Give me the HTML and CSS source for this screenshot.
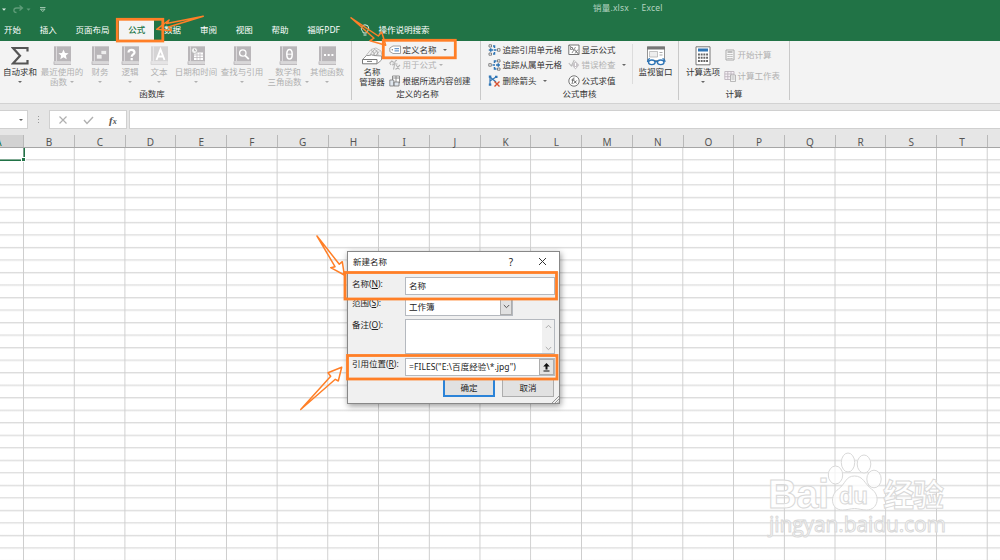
FILE: index.html
```html
<!DOCTYPE html>
<html lang="zh-CN">
<head>
    <meta charset="UTF-8">
    <meta name="viewport" content="width=device-width, initial-scale=1.0">
    <title>销量.xlsx - Excel</title>
    <link rel="stylesheet" href="styles.css">
</head>
<body>
    <header class="top">
        <div class="titlebar">
            <svg class="quick" width="50" height="18" viewBox="0 0 50 18">
                <path d="M2 8.5h4l-2 2.2z" fill="#dcebe2"/>
                <path d="M22 8h-5.5c-3.500 0-3.500 4.500 0 4.500M19.500 5.500L22.500 8l-3 2.500" fill="none" stroke="#5f9c79" stroke-width="1.300"/>
                <path d="M26.500 8.500h4l-2 2.200z" fill="#5f9c79"/>
                <path d="M40 7.500h5.500M40.500 9.200h4.500l-2.200 2.400z" fill="none" stroke="#a9cdb8" stroke-width=".9"/>
            </svg>
            <span class="doc-name">销量.xlsx&nbsp; -&nbsp; Excel</span>
        </div>
        <nav class="tabs">
            <span class="tab">开始</span>
            <span class="tab">插入</span>
            <span class="tab">页面布局</span>
            <span class="tab active">公式</span>
            <span class="tab">数据</span>
            <span class="tab">审阅</span>
            <span class="tab">视图</span>
            <span class="tab">帮助</span>
            <span class="tab">福昕PDF</span>
            <span class="tab search">
                <svg width="10" height="13" viewBox="0 0 10 13"><path d="M3.300 9C3 7 1.300 6.500 1.300 4.300a3.700 3.500 0 0 1 7.400 0C8.700 6.500 7 7 6.700 9zM3.500 11h3" fill="none" stroke="#e6f0ea"/></svg>
                操作说明搜索
            </span>
        </nav>
    </header>

    <section class="ribbon">
        <div class="group library">
            <div class="tools">
                <div class="big w40">
                    <svg width="18" height="20" viewBox="0 0 18 20"><path d="M16.500 5.500V2H2l7 7.700L2 17.500h14.500V14" fill="none" stroke="#555" stroke-width="2.200"/></svg>
                    <span>自动求和</span><i class="arrow"></i>
                </div>
                <div class="big w44 off">
                    <svg width="18" height="20" viewBox="0 0 18 20"><use href="#book"/><path d="M10.500 3.500l1.500 3.400 3.600.3-2.700 2.400.8 3.600-3.200-1.900-3.200 1.900.8-3.600-2.700-2.400 3.600-.3z" fill="#fff"/></svg>
                    <span>最近使用的</span><span>函数 <i class="arrow"></i></span>
                </div>
                <div class="big w32 off">
                    <svg width="18" height="20" viewBox="0 0 18 20"><use href="#book"/><path d="M10 4.500h5.500v4H10zM5.500 8.500H11v4.500H5.500z" fill="#eee" stroke="#b9b6b9" stroke-width=".7"/></svg>
                    <span>财务</span><i class="arrow"></i>
                </div>
                <div class="big w28 off">
                    <svg width="18" height="20" viewBox="0 0 18 20"><use href="#book"/><path d="M7.500 6.500c0-3.700 6-3.500 6 0 0 2-2.800 2-2.800 4.200M10.700 12v2.200" fill="none" stroke="#fff" stroke-width="2.200"/></svg>
                    <span>逻辑</span><i class="arrow"></i>
                </div>
                <div class="big w30 off">
                    <svg width="18" height="20" viewBox="0 0 18 20"><use href="#book" opacity=".5"/><path d="M6.500 14l4-10.500 4 10.500M8 10.500h5" fill="none" stroke="#fff" stroke-width="1.900"/></svg>
                    <span>文本</span><i class="arrow"></i>
                </div>
                <div class="big w44 off">
                    <svg width="18" height="20" viewBox="0 0 18 20"><use href="#book"/><path d="M7 6.500h9v7.500H7z" fill="#fff"/><path d="M7 9h9M7 11.500h9M10 7v7M13 7v7" stroke="#b9b6b9" stroke-width=".7"/><circle cx="7.500" cy="4.500" r="3" fill="#f3f3f3" stroke="#aaa" stroke-width=".7"/><path d="M7.500 2.700v2H9" fill="none" stroke="#999" stroke-width=".7"/></svg>
                    <span>日期和时间</span><i class="arrow"></i>
                </div>
                <div class="big w48 off">
                    <svg width="18" height="20" viewBox="0 0 18 20"><use href="#book"/><circle cx="9.800" cy="7" r="3.200" fill="none" stroke="#fff" stroke-width="1.300"/><path d="M12 9.300l3.800 3.800" stroke="#fff" stroke-width="1.800"/></svg>
                    <span>查找与引用</span><i class="arrow"></i>
                </div>
                <div class="big w44 off">
                    <svg width="18" height="20" viewBox="0 0 18 20"><use href="#book"/><ellipse cx="10.500" cy="8.200" rx="2.700" ry="4.800" fill="none" stroke="#fff" stroke-width="1.500"/><path d="M8 8.200h5" stroke="#fff"/></svg>
                    <span>数学和</span><span>三角函数 <i class="arrow"></i></span>
                </div>
                <div class="big w34 off">
                    <svg width="18" height="20" viewBox="0 0 18 20"><use href="#book"/><path d="M6 9h2M9.700 9h2M13.400 9h2" stroke="#fff" stroke-width="1.900"/></svg>
                    <span>其他函数</span><i class="arrow"></i>
                </div>
            </div>
            <div class="group-name">函数库</div>
        </div>

        <div class="group names">
            <div class="tools">
                <div class="big w34">
                    <svg width="22" height="20" viewBox="0 0 22 20"><path d="M5 9.500l5-6 5-1.500 5 3 1 5" fill="#f0f0f0" stroke="#b3b3b3" stroke-width=".8"/><path d="M8 10l5-6M11 10l5-5.500M14.500 10l3.500-4.500M10 4.500q3.500.5 3.500 5M13 3q4 1 4 6" fill="none" stroke="#a5a5a5" stroke-width=".8"/><path d="M1.500 13.500l4-4h3q2-1.500 4 0l8 .5v4l-4 3.500" fill="#fff" stroke="#8a8a8a" stroke-width=".9"/><path d="M1.500 13.500H16v4.300H1.500z" fill="#fff" stroke="#777"/><path d="M6 15.400h5" stroke="#777"/></svg>
                    <span>名称</span><span>管理器</span>
                </div>
                <div class="rows">
                    <div class="row">
                        <svg width="12" height="12" viewBox="0 0 12 12"><path d="M4 2h7.500v7.500H4L.8 7.500v-3.500z" fill="#fff" stroke="#8b8b8b" stroke-width=".8"/><circle cx="3.300" cy="5.700" r=".7" fill="#777"/><path d="M5.500 4.700H10M5.500 6.900H10" stroke="#6b9bd0" stroke-width="1.300"/></svg>
                        定义名称<i class="arrow"></i>
                    </div>
                    <div class="row off near">
                        <svg width="12" height="12" viewBox="0 0 12 12"><path d="M2 6L.8 4l2-2 2 1.500M3 6l3-1M8 1.500c-3-.5-2 4-3.500 9M3.500 5h5M7 6l3.500 4.500M11 6l-4.500 4.500" fill="none" stroke="#b5b5b5" stroke-width="1.100"/></svg>
                        用于公式<i class="arrow"></i>
                    </div>
                    <div class="row">
                        <svg width="12" height="12" viewBox="0 0 12 12"><path d="M3.500 1h7v7h-7zM3.500 3h7M7 1v7" fill="#fff" stroke="#777" stroke-width=".8"/><path d="M.8 5h4v6h-4zM5 7h5v4H5z" fill="#dfe7ef" stroke="#777" stroke-width=".8"/></svg>
                        根据所选内容创建
                    </div>
                </div>
            </div>
            <div class="group-name">定义的名称</div>
        </div>

        <div class="group audit">
            <div class="tools">
                <div class="rows">
                    <div class="row">
                        <svg width="13" height="12" viewBox="0 0 13 12"><path d="M1 .8h2.500v2.200H1zM1 9h2.500v2.200H1zM9.500 4.700H12v2.500H9.500z" fill="#fff" stroke="#666" stroke-width=".8"/><path d="M.8 6h4.500M5 2h1.500v2M5 10h1.500v-2M6 6h2.500M2.700 4.200v3.600" fill="none" stroke="#2f75b5" stroke-width="1.500"/></svg>
                        追踪引用单元格
                    </div>
                    <div class="row">
                        <svg width="13" height="12" viewBox="0 0 13 12"><path d="M.8 4.700h2.500v2.500H.8zM9.500.8H12v2.200H9.500zM9.500 9H12v2.200H9.500z" fill="#fff" stroke="#666" stroke-width=".8"/><path d="M4.500 6H7M6.500 4V2H8.500M6.500 8v2h2M8 6h4M10.300 4.200v3.600" fill="none" stroke="#2f75b5" stroke-width="1.500"/></svg>
                        追踪从属单元格
                    </div>
                    <div class="row">
                        <svg width="13" height="12" viewBox="0 0 13 12"><path d="M2 1v9M2 2l6 5M2 6l6-4" fill="none" stroke="#2f75b5" stroke-width="1.200"/><path d="M.8.500h2.500v2.300H.8zM.8 8.500h2.500v2.300H.8zM7 .8h2.500v2.300H7z" fill="#2f75b5"/><path d="M6.500 6.500l5 5M11.500 6.500l-5 5" stroke="#d9502e" stroke-width="1.400"/></svg>
                        删除箭头<i class="arrow"></i>
                    </div>
                </div>
                <div class="rows second">
                    <div class="row">
                        <svg width="12" height="12" viewBox="0 0 12 12"><path d="M.8 1H11v9.500H.8z" fill="#fff" stroke="#666" stroke-width=".9"/><path d="M2.500 3.500h2v2h-2zM4 9l3.500-6M7 5.500l3 4M10 5.500l-3 4M1 1l10 9.500" fill="none" stroke="#777" stroke-width=".8"/></svg>
                        显示公式
                    </div>
                    <div class="row off check">
                        <svg width="12" height="12" viewBox="0 0 12 12"><path d="M7.500 2l3.800 4-3.800 4.500L3.700 6z" fill="#c9c5c9"/><path d="M.8 4l2.500 3 3-6" fill="none" stroke="#bbb" stroke-width="1.100"/><path d="M7.500 4v3M7.500 8v1" stroke="#fff"/></svg>
                        错误检查<i class="arrow"></i>
                    </div>
                    <div class="row">
                        <svg width="12" height="12" viewBox="0 0 12 12"><circle cx="6" cy="6" r="5.200" fill="#fff" stroke="#666" stroke-width=".9"/><path d="M6.500 3c-2-.5-1.500 2-2.500 6M3.500 5h3M6 5.500l2.500 3M8.700 5.500L5.700 8.500" fill="none" stroke="#444" stroke-width=".8"/></svg>
                        公式求值
                    </div>
                </div>
                <div class="big watch">
                    <svg width="22" height="20" viewBox="0 0 22 20"><path d="M2.500 1h17v13.500h-17z" fill="#fff" stroke="#888" stroke-width=".9"/><path d="M2 .5h18v3H2z" fill="#777"/><path d="M4.500 5.500h8v5.500h-8z" fill="#eee" stroke="#aaa" stroke-width=".7"/><path d="M14.500 6.500h3M14.500 9h3" stroke="#aaa"/><path d="M2.500 16q0-3 2.500-3.500M20 16q0-3-2.500-3.500" fill="none" stroke="#2f75b5" stroke-width="1.200"/><ellipse cx="6.800" cy="16.300" rx="3.300" ry="2.300" fill="#fff" stroke="#2f75b5" stroke-width="1.400"/><ellipse cx="15.700" cy="16.300" rx="3.300" ry="2.300" fill="#fff" stroke="#2f75b5" stroke-width="1.400"/><path d="M9.800 15.500h3" stroke="#2f75b5" stroke-width="1.400"/></svg>
                    <span>监视窗口</span>
                </div>
            </div>
            <div class="group-name">公式审核</div>
        </div>

        <div class="group calc">
            <div class="tools">
                <div class="big w48">
                    <svg width="16" height="20" viewBox="0 0 16 20"><path d="M1 .8h14v18H1z" fill="#fff" stroke="#777"/><path d="M3 2.500h10v3H3z" fill="#2f75b5"/><path d="M3 8.500h10M3 11.700h10M3 15h10" stroke="#666" stroke-width="2" stroke-dasharray="1.900 .8"/></svg>
                    <span>计算选项</span><i class="arrow"></i>
                </div>
                <div class="rows pair off">
                    <div class="row">
                        <svg width="12" height="12" viewBox="0 0 12 12"><path d="M2 1h8v10H2z" fill="#f6f6f6" stroke="#aaa"/><path d="M3.500 3h5" stroke="#aaa" stroke-width="1.500"/><path d="M3.500 5.500h5M3.500 7.500h5M3.500 9.500h5" stroke="#aaa" stroke-dasharray="1.200 .7"/></svg>
                        开始计算
                    </div>
                    <div class="row">
                        <svg width="12" height="12" viewBox="0 0 12 12"><path d="M.8 1.500H10v8H.8zM.8 4H10M.8 6.700H10M3.800 1.500v8M7 1.500v8" fill="#f6f0f6" stroke="#b9b0b9" stroke-width=".8"/><path d="M6.500 5h5v6.500h-5zM7.500 7h3M7.500 9h3" fill="#f3f3f3" stroke="#aaa" stroke-width=".8"/></svg>
                        计算工作表
                    </div>
                </div>
            </div>
            <div class="group-name">计算</div>
        </div>
    </section>

    <section class="formula-bar">
        <div class="name-box"><i class="arrow"></i></div>
        <div class="dots"><i></i><i></i><i></i></div>
        <div class="fx-box">
            <svg width="10" height="10" viewBox="0 0 10 10"><path d="M1.500 1.500l7 7M8.500 1.500l-7 7" stroke="#b0b0b0" stroke-width="1.200"/></svg>
            <svg width="11" height="10" viewBox="0 0 11 10"><path d="M1 5l3 3.500L10 2" fill="none" stroke="#b0b0b0" stroke-width="1.400"/></svg>
            <span class="fx">f<small>x</small></span>
        </div>
        <div class="fx-input"></div>
    </section>

    <main class="sheet">
        <div class="columns" id="columns"></div>
        <div class="cells"><div class="selected"></div></div>
    </main>

    <div class="dialog">
        <div class="dialog-title">
            <span>新建名称</span>
            <span class="help">?</span>
            <svg width="9" height="9" viewBox="0 0 9 9"><path d="M1 1l7 7M8 1L1 8" stroke="#333" stroke-width="1"/></svg>
        </div>
        <div class="field name">
            <label>名称(<u>N</u>):</label>
            <div class="input">名称</div>
        </div>
        <div class="field scope">
            <label>范围(<u>S</u>):</label>
            <div class="input">工作簿<span class="drop"><svg width="7" height="5" viewBox="0 0 7 5"><path d="M.8 1l2.700 2.700L6.200 1" fill="none" stroke="#555"/></svg></span></div>
        </div>
        <div class="field memo">
            <label>备注(<u>O</u>):</label>
            <div class="input">
                <span class="scroll">
                    <svg width="7" height="5" viewBox="0 0 7 5"><path d="M.8 4l2.700-2.700L6.200 4" fill="none" stroke="#aaa"/></svg>
                    <svg width="7" height="5" viewBox="0 0 7 5"><path d="M.8 1l2.700 2.700L6.200 1" fill="none" stroke="#aaa"/></svg>
                </span>
            </div>
        </div>
        <div class="field ref">
            <label>引用位置(<u>R</u>):</label>
            <div class="input">=FILES("E:\百度经验\*.jpg")<span class="pick"><svg width="9" height="9" viewBox="0 0 9 9"><path d="M4.500 0L7.800 3.500H5.500V6.500h-2v-3H1.200z" fill="#111"/><path d="M1.500 8h6" stroke="#111"/></svg></span></div>
        </div>
        <div class="actions">
            <span class="btn ok">确定</span>
            <span class="btn">取消</span>
        </div>
        <svg class="grip" width="7" height="7" viewBox="0 0 7 7"><path d="M0 7l7-7M3 7l4-4M5.500 7L7 5.500" stroke="#888" stroke-width=".9"/></svg>
    </div>

    <svg class="watermark" width="190" height="92" viewBox="0 0 190 92">
        <g class="wm">
            <text class="latin" x="6" y="58" font-size="40" textLength="61">Bai</text>
            <ellipse cx="73.500" cy="25" rx="7.200" ry="9"/>
            <ellipse cx="86" cy="12.500" rx="6.700" ry="9.500"/>
            <ellipse cx="102" cy="14" rx="6.800" ry="9"/>
            <ellipse cx="112" cy="29" rx="7.200" ry="8.800"/>
            <path d="M92.500 26c-9 0-9 8-16 13-9 6-8 21 4 21 5 0 8-1.500 12-1.500s7 1.500 12 1.500c12 0 14-15 5-21-7-5-8-13-17-13z"/>
            <text class="latin" x="77" y="54" font-size="24" textLength="29">du</text>
            <text x="121" y="56" font-size="31" font-weight="700" textLength="61">经验</text>
            <text x="7" y="82" font-size="21" textLength="177">jingyan.baidu.com</text>
        </g>
    </svg>

    <!-- highlight boxes and hand arrows -->
    <svg class="marks" width="1000" height="560" viewBox="0 0 1000 560">
        <rect x="117.300" y="19.300" width="45.500" height="21.700"/>
        <rect x="383.300" y="40.300" width="72" height="17.500"/>
        <rect x="345" y="272.500" width="211.500" height="26.500"/>
        <rect x="347.500" y="355.500" width="209.500" height="23.500"/>
        <path class="thin" d="M203.300 16.200L166.700 23.500l2.300-3.500-12.300 9.300 15 1.400-3.200-3.700z"/>
        <path class="thin" d="M351 17.800l27.300 18.200 3.400-4 4 13.300-15.700-4.600 4-2.500z"/>
        <path class="thin" d="M317 236l22.300 28.200 3-2.500 2 13.300-13.600-7.300 4.300-1z"/>
        <path class="thin" d="M300.700 409.500l34.600-30.200 3 1.700 3.400-13.700-13.700 5.400 2.700 3.500z"/>
    </svg>

    <svg width="0" height="0" class="defs">
        <g id="book"><path d="M1 .3h17v15.200H1z" fill="#b9b6b9"/><path d="M3.500.3v15" stroke="#e4e2e4" stroke-width=".8"/><path d="M1 15.500v3h17v-3M1 17h16" fill="none" stroke="#b9b6b9" stroke-width=".9"/></g>
    </svg>

    <script>
        const columns = document.getElementById('columns');
        'ABCDEFGHIJKLMNOPQRST'.split('').forEach((letter, i) => {
            const cell = document.createElement('div');
            cell.className = i === 0 ? 'col current' : 'col';
            cell.textContent = letter;
            columns.appendChild(cell);
        });
    </script>
</body>
</html>
```

FILE: styles.css
```css
* {
    margin: 0;
    padding: 0;
    box-sizing: border-box;
}

body {
    position: relative;
    width: 1000px;
    height: 560px;
    overflow: hidden;
    display: flex;
    flex-direction: column;
    font-family: "Noto Sans", "Noto Sans CJK SC", sans-serif;
    font-size: 8.5px;
    line-height: 10px;
    color: #333;
    background: #fff;
}

svg {
    display: block;
    flex: none;
}

.arrow {
    display: inline-block;
    border: 2px solid transparent;
    border-top: 2.5px solid #666;
    border-bottom: 0;
}

.off {
    color: #b1b1b1;
}

.off .arrow {
    border-top-color: #b1b1b1;
}

/* title and tabs */
.top {
    height: 41px;
    flex: none;
    background: #217346;
    color: #fff;
}

.titlebar {
    display: flex;
    height: 20px;
}

.doc-name {
    margin-left: 543px;
    line-height: 16px;
    letter-spacing: .2px;
    color: #b5d3c1;
}

.tabs {
    display: flex;
    gap: 1px;
    height: 21px;
    margin-left: -5px;
}

.tab {
    padding: 0 8.9px;
    line-height: 20px;
    white-space: nowrap;
}

.tab.active {
    background: #f3f3f3;
    color: #217346;
    font-weight: 500;
}

.tab.search {
    display: flex;
    align-items: center;
    gap: 8px;
    padding-left: 10.5px;
    padding-bottom: 1px;
}

/* ribbon */
.ribbon {
    display: flex;
    flex: none;
    height: 63px;
    background: #f3f3f3;
    border-bottom: 1px solid #d2d2d2;
}

.group {
    display: flex;
    flex-direction: column;
    white-space: nowrap;
    padding-top: 3px;
    height: 59px;
    border-right: 1px solid #c9c9c9;
}

.library {
    width: 352px;
}

.library .group-name {
    padding-right: 47px;
}

.names {
    width: 129px;
    padding-left: 3px;
}

.audit {
    width: 198px;
    padding-left: 7px;
}

.audit .group-name {
    padding-right: 7px;
}

.calc {
    width: 111px;
}

.tools {
    display: flex;
    height: 47px;
}

.group-name {
    text-align: center;
    line-height: 12px;
}

.big {
    display: flex;
    flex-direction: column;
    align-items: center;
    flex: none;
    padding-top: 2px;
}

.big svg {
    height: 20px;
    margin-bottom: 1px;
}

.big > .arrow {
    margin-top: 4px;
}

.big span .arrow {
    margin: 0 0 2px 1px;
}

.w28 { width: 28px; }
.w30 { width: 30px; }
.w32 { width: 32px; }
.w34 { width: 34px; }
.w40 { width: 40px; }
.w44 { width: 44px; }
.w48 { width: 48px; }

.rows {
    display: flex;
    flex-direction: column;
    gap: 3.3px;
}

.row {
    display: flex;
    align-items: center;
    gap: 1.5px;
    height: 12px;
}

.row .arrow {
    margin-left: 5px;
}

.row.near .arrow {
    margin-left: 1px;
}

.row.check .arrow {
    border-top-color: #666;
}

.audit .second {
    width: 65px;
    margin-left: 6px;
    border-right: 1px solid #dcdcdc;
    height: 40px;
}

.watch {
    width: 45px;
}

.pair {
    gap: 8.5px;
    padding-top: 5px;
    margin-left: -3px;
}

/* formula bar */
.formula-bar {
    display: flex;
    flex: none;
    height: 31px;
    padding-top: 6px;
    background: #e6e6e6;
}

.name-box,
.fx-box,
.fx-input {
    height: 19px;
    background: #fff;
    border: 1px solid #d0d0d0;
}

.name-box {
    display: flex;
    align-items: center;
    justify-content: flex-end;
    width: 28px;
    padding-right: 4px;
    border-left: 0;
}

.dots {
    display: flex;
    flex-direction: column;
    justify-content: center;
    gap: 2px;
    height: 19px;
    width: 21px;
    padding-left: 10px;
}

.dots i {
    width: 1px;
    height: 1px;
    background: #999;
}

.fx-box {
    display: flex;
    align-items: center;
    gap: 15px;
    width: 78px;
    padding-left: 8px;
}

.fx {
    font: italic 700 11px "Liberation Serif", serif;
    color: #555;
}

.fx small {
    font-size: 8px;
}

.fx-input {
    flex: 1;
    margin-left: 2px;
    border-right: 0;
}

/* sheet */
.sheet {
    flex: 1;
    display: flex;
    flex-direction: column;
}

.columns {
    display: flex;
    height: 13px;
    margin-left: -26.5px;
    background: #e6e6e6;
    border-bottom: 1px solid #a6a6a6;
    color: #555;
    font-size: 10px;
}

.col {
    width: 50.72px;
    flex: none;
    line-height: 14px;
    text-align: center;
    border-right: 1px solid #b9b9b9;
}

.col.current {
    background: #d2d2d2;
    color: #217346;
}

.cells {
    flex: 1;
    background:
        repeating-linear-gradient(to right, transparent 0, transparent 49px, #cecece 49.8px, #cecece 50px, transparent 50.72px) -26.4px 0 / 1100px 100%,
        repeating-linear-gradient(to bottom, transparent 0, transparent 10.8px, #cecece 11.6px, #cecece 11.8px, transparent 12.52px) 0 .3px;
}

.selected {
    display: flex;
    align-items: flex-end;
    justify-content: flex-end;
    width: 25px;
    height: 13px;
    box-shadow: inset -1.5px -1.5px 0 #217346;
}

.selected::after {
    content: "";
    width: 3px;
    height: 3px;
    background: #217346;
    outline: 1px solid #fff;
}

/* new name dialog */
.dialog {
    position: absolute;
    left: 347px;
    top: 251px;
    width: 213px;
    height: 153px;
    background: #f0f0f0;
    border: 1px solid #888;
    box-shadow: 1px 2px 6px rgba(0, 0, 0, .4);
    color: #222;
    display: flex;
    flex-direction: column;
}

.dialog-title {
    display: flex;
    align-items: center;
    height: 20px;
    padding: 0 12px 1px 5px;
    background: #fff;
}

.help {
    margin-left: auto;
    margin-right: 25px;
    font-size: 10px;
}

.field {
    display: flex;
    padding-left: 4px;
}

.field label {
    width: 53px;
    flex: none;
}

.input {
    display: flex;
    align-items: center;
    width: 150px;
    height: 18px;
    padding-left: 3px;
    background: #fff;
    border: 1px solid #b5b9bf;
}

.name {
    padding-top: 5px;
    height: 26px;
}

.name label {
    padding-top: 2px;
}

.scope {
    height: 21px;
}

.scope .input {
    width: 108px;
    padding-bottom: 1px;
}

.drop {
    display: flex;
    align-items: center;
    justify-content: center;
    width: 12px;
    height: 16px;
    margin-left: auto;
    background: #e1e1e1;
    border: 1px solid #adadad;
}

.memo {
    height: 39px;
}

.memo label {
    padding-top: 1px;
}

.memo .input {
    height: 35px;
}

.scroll {
    display: flex;
    flex-direction: column;
    justify-content: space-between;
    align-items: center;
    width: 12px;
    height: 33px;
    margin-left: auto;
    padding: 4px 0 2px;
    background: #f0f0f0;
}

.ref {
    height: 20px;
}

.ref label {
    padding-top: 1px;
}

.ref .input {
    letter-spacing: .08px;
}

.pick {
    display: flex;
    align-items: center;
    justify-content: center;
    width: 15px;
    height: 16px;
    margin-left: auto;
    background: #e4e4e4;
    border: 1px solid #adadad;
}

.actions {
    display: flex;
    justify-content: flex-end;
    gap: 7px;
    padding-right: 5px;
}

.btn {
    width: 52px;
    height: 19px;
    line-height: 17px;
    text-align: center;
    background: #e1e1e1;
    border: 1px solid #adadad;
}

.btn.ok {
    border: 2px solid #2b83d8;
    line-height: 15px;
}

.grip {
    position: absolute;
    right: 0;
    bottom: 0;
}

/* overlays */
.watermark {
    position: absolute;
    left: 762px;
    top: 450px;
}

.wm {
    font-family: "Open Sans", "Noto Sans CJK SC", sans-serif;
    fill: rgba(255, 255, 255, .75);
    stroke: #d9d9d9;
    stroke-width: 1;
}

.wm .latin {
    font-family: "Liberation Sans", sans-serif;
    font-weight: 700;
}

.marks {
    position: absolute;
    left: 0;
    top: 0;
    fill: none;
    stroke: #ff7f27;
    stroke-width: 2.8;
}

.thin {
    stroke-width: 1.5;
    stroke-linejoin: round;
}

.defs {
    position: absolute;
}
```
